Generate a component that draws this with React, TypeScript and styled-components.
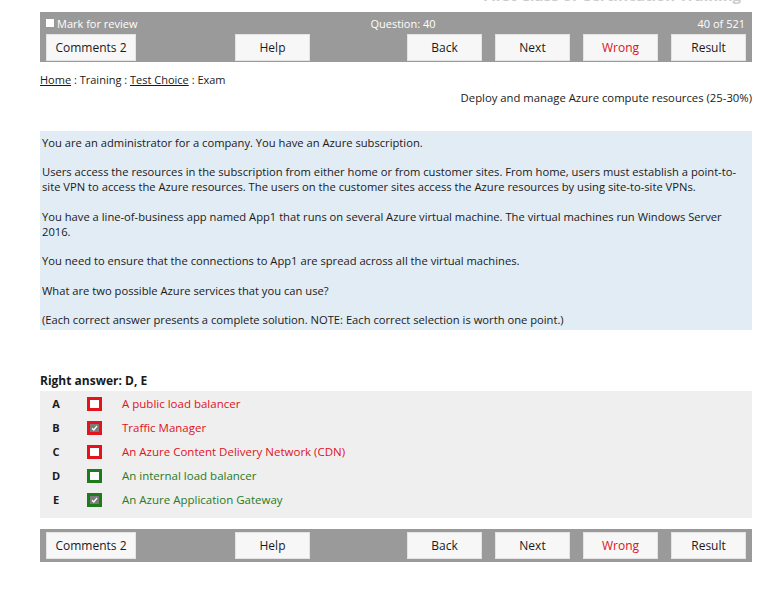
import React from "react";
import styled, { createGlobalStyle } from "styled-components";

const Global = createGlobalStyle`
  html, body { margin: 0; padding: 0; background: #ffffff; }
  body { font-family: "Open Sans", "Noto Sans", "Liberation Sans", sans-serif; color: #1a1a1a; }
`;

const Page = styled.div`
  width: 712px;
  margin-left: 40px;
  display: flex;
  flex-direction: column;
`;

const TitleClip = styled.div`
  height: 12px;
  overflow: hidden;
  display: flex;
  justify-content: flex-end;
  padding-right: 11px;
`;

const TitleText = styled.div`
  margin-top: -15px;
  font-size: 15px;
  line-height: 20px;
  font-weight: 700;
  color: #cccccc;
  white-space: nowrap;
`;

const Bar = styled.div<{ $compact?: boolean }>`
  background: #9a9a9a;
  padding: ${(p) => (p.$compact ? "2px 6px 2px" : "1px 6px 0")};
  display: flex;
  flex-direction: column;
`;

const InfoRow = styled.div`
  height: 20px;
  display: grid;
  grid-template-columns: 1fr auto 1fr;
  align-items: center;
  color: #ffffff;
  font-size: 11px;
`;

const MarkLabel = styled.div`
  display: flex;
  align-items: center;
  gap: 3px;
`;

const MarkBox = styled.span`
  width: 8px;
  height: 8px;
  background: #ffffff;
  display: inline-block;
`;

const QuestionNo = styled.div`
  padding-left: 14px;
`;

const Counter = styled.div`
  text-align: right;
  padding-right: 1px;
`;

const ButtonRow = styled.div`
  display: flex;
  align-items: center;
  height: 29px;
`;

const Btn = styled.div<{ $w?: number; $red?: boolean }>`
  width: ${(p) => p.$w ?? 74}px;
  height: 27px;
  box-sizing: border-box;
  background: #f7f7f7;
  border: 1px solid #e4e4e4;
  display: flex;
  align-items: center;
  justify-content: center;
  font-size: 12px;
  color: ${(p) => (p.$red ? "#e0101c" : "#1a1a1a")};
`;

const LeftGroup = styled.div`
  display: flex;
  gap: 99px;
`;

const RightGroup = styled.div`
  margin-left: auto;
  display: flex;
  gap: 13px;
`;

const Crumbs = styled.div`
  margin-top: 10px;
  font-size: 11px;
  line-height: 16px;
  color: #1a1a1a;
`;

const CrumbLink = styled.span`
  text-decoration: underline;
`;

const Category = styled.div`
  margin-top: 2px;
  text-align: right;
  font-size: 11.3px;
  line-height: 16px;
`;

const QuestionBox = styled.div`
  margin-top: 25px;
  background: #e2ecf5;
  padding: 4px 2px 3px 2px;
  font-size: 11.2px;
  line-height: 15px;
  display: flex;
  flex-direction: column;
  gap: 14.4px;
`;

const Para = styled.p`
  margin: 0;
`;

const RightAnswer = styled.div`
  margin-top: 43px;
  font-size: 12px;
  line-height: 16px;
  font-weight: 700;
`;

const Answers = styled.div`
  margin-top: 2px;
  background: #efefef;
  padding: 1px 0 6px;
  display: flex;
  flex-direction: column;
`;

const AnswerRow = styled.div<{ $tone: "red" | "green" }>`
  height: 24px;
  display: flex;
  align-items: center;
  font-size: 11.5px;
  color: ${(p) => (p.$tone === "red" ? "#e0121c" : "#2a7a1e")};
`;

const Letter = styled.div`
  width: 32px;
  text-align: center;
  font-weight: 700;
  font-size: 11px;
  color: #1a1a1a;
`;

const Check = styled.div<{ $tone: "red" | "green"; $checked?: boolean }>`
  margin-left: 15px;
  width: 15px;
  height: 14px;
  box-sizing: border-box;
  border: 3px solid ${(p) => (p.$tone === "red" ? "#e5141c" : "#1f7a1a")};
  background: ${(p) => (p.$checked ? "#7b7b7b" : "#ffffff")};
  display: flex;
  align-items: center;
  justify-content: center;
`;

const Label = styled.div`
  margin-left: 20px;
`;

const BottomBar = styled(Bar)`
  margin-top: 11px;
`;

const Tick = () => (
  <svg width="7" height="6" viewBox="0 0 7 6">
    <path d="M1 3.2 L2.8 5 L6 1" fill="none" stroke="#ffffff" strokeWidth="1.3" />
  </svg>
);

const Buttons = () => (
  <ButtonRow>
    <LeftGroup>
      <Btn $w={90}>Comments 2</Btn>
      <Btn $w={75}>Help</Btn>
    </LeftGroup>
    <RightGroup>
      <Btn $w={75}>Back</Btn>
      <Btn $w={75}>Next</Btn>
      <Btn $w={75} $red>Wrong</Btn>
      <Btn $w={75}>Result</Btn>
    </RightGroup>
  </ButtonRow>
);

const answers: { l: string; text: string; tone: "red" | "green"; checked: boolean }[] = [
  { l: "A", text: "A public load balancer", tone: "red", checked: false },
  { l: "B", text: "Traffic Manager", tone: "red", checked: true },
  { l: "C", text: "An Azure Content Delivery Network (CDN)", tone: "red", checked: false },
  { l: "D", text: "An internal load balancer", tone: "green", checked: false },
  { l: "E", text: "An Azure Application Gateway", tone: "green", checked: true },
];

export default function App() {
  return (
    <>
      <Global />
      <Page>
        <TitleClip>
          <TitleText>First Class of Certification Training</TitleText>
        </TitleClip>
        <Bar>
          <InfoRow>
            <MarkLabel>
              <MarkBox />
              Mark for review
            </MarkLabel>
            <QuestionNo>Question: 40</QuestionNo>
            <Counter>40 of 521</Counter>
          </InfoRow>
          <Buttons />
        </Bar>
        <Crumbs>
          <CrumbLink>Home</CrumbLink> : Training : <CrumbLink>Test Choice</CrumbLink> : Exam
        </Crumbs>
        <Category>Deploy and manage Azure compute resources (25-30%)</Category>
        <QuestionBox>
          <Para>You are an administrator for a company. You have an Azure subscription.</Para>
          <Para>
            Users access the resources in the subscription from either home or from customer sites. From home, users must establish a point-to-
            <br />
            site VPN to access the Azure resources. The users on the customer sites access the Azure resources by using site-to-site VPNs.
          </Para>
          <Para>
            You have a line-of-business app named App1 that runs on several Azure virtual machine. The virtual machines run Windows Server
            <br />
            2016.
          </Para>
          <Para>You need to ensure that the connections to App1 are spread across all the virtual machines.</Para>
          <Para>What are two possible Azure services that you can use?</Para>
          <Para>(Each correct answer presents a complete solution. NOTE: Each correct selection is worth one point.)</Para>
        </QuestionBox>
        <RightAnswer>Right answer: D, E</RightAnswer>
        <Answers>
          {answers.map((a) => (
            <AnswerRow key={a.l} $tone={a.tone}>
              <Letter>{a.l}</Letter>
              <Check $tone={a.tone} $checked={a.checked}>
                {a.checked && <Tick />}
              </Check>
              <Label>{a.text}</Label>
            </AnswerRow>
          ))}
        </Answers>
        <BottomBar $compact>
          <Buttons />
        </BottomBar>
      </Page>
    </>
  );
}
